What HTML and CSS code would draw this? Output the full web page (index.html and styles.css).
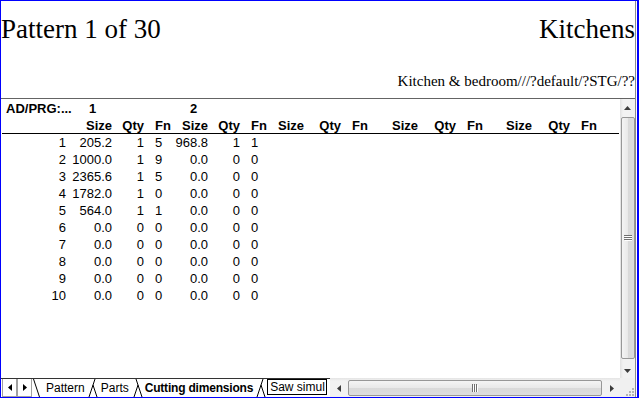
FILE: index.html
```html
<!DOCTYPE html>
<html lang="en">
<head>
    <meta charset="UTF-8">
    <title>Pattern 1 of 30</title>
    <link rel="stylesheet" href="styles.css">
</head>
<body>
    <div class="window">
        <div class="sheet">
            <header class="head">
                <div class="title">
                    <span>Pattern 1 of 30</span>
                    <span>Kitchens</span>
                </div>
                <div class="sub">Kitchen &amp; bedroom///?default/?STG/??</div>
            </header>

            <div class="view">
                <div class="grid">
                    <div class="row group">
                        <div class="label">AD/PRG:...</div>
                        <div class="g1">1</div>
                        <div></div>
                        <div></div>
                        <div class="g2">2</div>
                    </div>
                    <div class="row cols">
                        <div></div>
                        <div>Size</div><div>Qty</div><div class="f">Fn</div>
                        <div>Size</div><div>Qty</div><div class="f">Fn</div>
                        <div>Size</div><div>Qty</div><div class="f">Fn</div>
                        <div>Size</div><div>Qty</div><div class="f">Fn</div>
                        <div>Size</div><div>Qty</div><div class="f">Fn</div>
                    </div>
                    <div class="row"><div>1</div><div>205.2</div><div>1</div><div class="f">5</div><div>968.8</div><div>1</div><div class="f">1</div></div>
                    <div class="row"><div>2</div><div>1000.0</div><div>1</div><div class="f">9</div><div>0.0</div><div>0</div><div class="f">0</div></div>
                    <div class="row"><div>3</div><div>2365.6</div><div>1</div><div class="f">5</div><div>0.0</div><div>0</div><div class="f">0</div></div>
                    <div class="row"><div>4</div><div>1782.0</div><div>1</div><div class="f">0</div><div>0.0</div><div>0</div><div class="f">0</div></div>
                    <div class="row"><div>5</div><div>564.0</div><div>1</div><div class="f">1</div><div>0.0</div><div>0</div><div class="f">0</div></div>
                    <div class="row"><div>6</div><div>0.0</div><div>0</div><div class="f">0</div><div>0.0</div><div>0</div><div class="f">0</div></div>
                    <div class="row"><div>7</div><div>0.0</div><div>0</div><div class="f">0</div><div>0.0</div><div>0</div><div class="f">0</div></div>
                    <div class="row"><div>8</div><div>0.0</div><div>0</div><div class="f">0</div><div>0.0</div><div>0</div><div class="f">0</div></div>
                    <div class="row"><div>9</div><div>0.0</div><div>0</div><div class="f">0</div><div>0.0</div><div>0</div><div class="f">0</div></div>
                    <div class="row"><div>10</div><div>0.0</div><div>0</div><div class="f">0</div><div>0.0</div><div>0</div><div class="f">0</div></div>
                </div>

                <div class="vscroll">
                    <div class="vbtn">
                        <svg width="7" height="4" viewBox="0 0 7 4"><polygon points="3.5,0 7,4 0,4" fill="#3c3c3c"/></svg>
                    </div>
                    <div class="vthumb">
                        <svg width="8" height="6" viewBox="0 0 8 6">
                            <rect x="0" y="0" width="8" height="1" fill="#6f6f6f"/>
                            <rect x="0" y="2" width="8" height="1" fill="#6f6f6f"/>
                            <rect x="0" y="4" width="8" height="1" fill="#6f6f6f"/>
                            <rect x="1" y="1" width="7" height="1" fill="#fff"/>
                            <rect x="1" y="3" width="7" height="1" fill="#fff"/>
                            <rect x="1" y="5" width="7" height="1" fill="#fff"/>
                        </svg>
                    </div>
                    <div class="vbtn down">
                        <svg width="7" height="4" viewBox="0 0 7 4"><polygon points="0,0 7,0 3.5,4" fill="#3c3c3c"/></svg>
                    </div>
                </div>
            </div>

            <div class="bar">
                <div class="tabs">
                    <div class="nav first">
                        <svg width="4" height="7" viewBox="0 0 4 7"><polygon points="4,0 0,3.5 4,7" fill="#000"/></svg>
                    </div>
                    <div class="nav">
                        <svg width="4" height="7" viewBox="0 0 4 7"><polygon points="0,0 4,3.5 0,7" fill="#000"/></svg>
                    </div>
                    <svg class="edge" width="14" height="18" viewBox="0 0 14 18">
                        <line x1="1.5" y1="0" x2="7.5" y2="18" stroke="#000"/>
                    </svg>
                    <span class="tab">Pattern</span>
                    <svg class="edge" width="16" height="18" viewBox="0 0 16 18">
                        <line x1="4" y1="18" x2="10" y2="0" stroke="#000"/>
                        <line x1="8" y1="6" x2="12" y2="18" stroke="#000"/>
                    </svg>
                    <span class="tab">Parts</span>
                    <svg class="edge" width="16" height="18" viewBox="0 0 16 18">
                        <line x1="7" y1="0" x2="13" y2="18" stroke="#000"/>
                        <line x1="5" y1="18" x2="9" y2="6" stroke="#000"/>
                    </svg>
                    <span class="tab on">Cutting dimensions</span>
                    <svg class="edge" width="14" height="18" viewBox="0 0 14 18">
                        <line x1="4" y1="18" x2="10" y2="0" stroke="#000"/>
                        <line x1="8" y1="6" x2="12" y2="18" stroke="#000"/>
                    </svg>
                    <span class="tab cut">Saw simul</span>
                </div>

                <div class="hscroll">
                    <div class="hbtn">
                        <svg width="4" height="7" viewBox="0 0 4 7"><polygon points="4,0 0,3.5 4,7" fill="#3c3c3c"/></svg>
                    </div>
                    <div class="hthumb">
                        <svg width="6" height="8" viewBox="0 0 6 8">
                            <rect x="0" y="0" width="1" height="8" fill="#6f6f6f"/>
                            <rect x="2" y="0" width="1" height="8" fill="#6f6f6f"/>
                            <rect x="4" y="0" width="1" height="8" fill="#6f6f6f"/>
                            <rect x="1" y="1" width="1" height="7" fill="#fff"/>
                            <rect x="3" y="1" width="1" height="7" fill="#fff"/>
                            <rect x="5" y="1" width="1" height="7" fill="#fff"/>
                        </svg>
                    </div>
                    <div class="hbtn">
                        <svg width="4" height="7" viewBox="0 0 4 7"><polygon points="0,0 4,3.5 0,7" fill="#3c3c3c"/></svg>
                    </div>
                </div>

                <div class="corner">
                    <svg width="10" height="10" viewBox="0 0 10 10">
                        <rect x="7" y="1" width="2" height="2" fill="#b4b4b4"/>
                        <rect x="4" y="4" width="2" height="2" fill="#b4b4b4"/>
                        <rect x="7" y="4" width="2" height="2" fill="#b4b4b4"/>
                        <rect x="1" y="7" width="2" height="2" fill="#b4b4b4"/>
                        <rect x="4" y="7" width="2" height="2" fill="#b4b4b4"/>
                        <rect x="7" y="7" width="2" height="2" fill="#b4b4b4"/>
                    </svg>
                </div>
            </div>
        </div>
    </div>
</body>
</html>
```

FILE: styles.css
```css
body {
    margin: 0;
    background-color: #fff;
}
.window {
    width: 639px;
    height: 398px;
    box-sizing: border-box;
    border: 1px solid #0000ff;
    border-right-width: 2px;
    padding-right: 1px;
    background-color: #fff;
}
.sheet {
    height: 100%;
    display: flex;
    flex-direction: column;
    border-right: 1px solid #8c8c8c;
}

/* header */
.head {
    height: 98px;
    box-sizing: border-box;
    padding-top: 13px;
    border-bottom: 1px solid #646464;
    font-family: "Liberation Serif", "Times New Roman", serif;
    color: #000;
}
.title {
    display: flex;
    justify-content: space-between;
    font-size: 27px;
    line-height: 30px;
}
.sub {
    margin-top: 28px;
    text-align: right;
    font-size: 15px;
    line-height: 18px;
}

/* grid */
.view {
    height: 279px;
    display: flex;
}
.grid {
    flex: 1;
    padding-top: 1px;
    font: 13px/17px "Liberation Sans", Arial, sans-serif;
    color: #000;
}
.row {
    display: grid;
    grid-template-columns: 64px 46px 32px 31px 33px 32px 32px 32px 37px 45px 32px 38px 44px 32px 38px 30px 1fr;
    height: 17px;
    margin: 0 1px;
    white-space: nowrap;
}
.row > div {
    text-align: right;
}
.row > .f {
    text-align: left;
    padding-left: 11px;
}
.group {
    font-weight: bold;
}
.row > .label {
    text-align: left;
    padding-left: 4px;
}
.row > .g1 {
    text-align: left;
    padding-left: 23px;
}
.row > .g2 {
    text-align: left;
    padding-left: 15px;
}
.cols {
    font-weight: bold;
    height: 16px;
    border-bottom: 1px solid #000;
}

/* vertical scrollbar */
.vscroll {
    width: 15px;
    display: flex;
    flex-direction: column;
    background: linear-gradient(to right, #e2e2e2, #f2f2f2 3px, #f2f2f2);
}
.vbtn {
    height: 17px;
    display: flex;
    align-items: center;
    justify-content: center;
}
.vbtn.down {
    height: 18px;
    padding-top: 3px;
    box-sizing: border-box;
}
.vthumb {
    flex: 1;
    margin: 1px 0 1px 1px;
    border: 1px solid #979797;
    border-radius: 2px;
    background: linear-gradient(to right, #f4f4f4, #e8e8e8 50%, #d9d9d9 51%, #dedede);
    display: flex;
    align-items: center;
    justify-content: center;
}

/* bottom bar */
.bar {
    height: 19px;
    display: flex;
    font: 12px "Liberation Sans", Arial, sans-serif;
    color: #000;
}
.tabs {
    width: 329px;
    display: flex;
    border-top: 1px solid #333;
    overflow: hidden;
    white-space: nowrap;
}
.nav {
    width: 15px;
    box-sizing: border-box;
    border: 1px solid #a0a0a0;
    border-top: none;
    display: flex;
    align-items: center;
    justify-content: center;
}
.nav.first {
    margin-left: 1px;
}
.edge {
    display: block;
    flex: none;
}
.tab {
    line-height: 18px;
}
.tab.on {
    font-weight: bold;
    letter-spacing: -0.2px;
}
.tab.cut {
    align-self: flex-start;
    height: 14px;
    line-height: 14px;
    border: 1px solid #000;
    padding: 0 1px 0 2px;
}

/* horizontal scrollbar */
.hscroll {
    flex: 1;
    display: flex;
    padding: 2px 0 1px;
    background: linear-gradient(#e4e4e4, #f2f2f2 3px, #f2f2f2);
}
.hbtn {
    width: 17px;
    display: flex;
    align-items: center;
    justify-content: center;
}
.hthumb {
    flex: 1;
    margin: 0 1px;
    border: 1px solid #979797;
    border-radius: 2px;
    background: linear-gradient(#f4f4f4, #e8e8e8 50%, #d9d9d9 51%, #dedede);
    display: flex;
    align-items: center;
    justify-content: center;
}
.corner {
    width: 15px;
    background-color: #f0f0f0;
    display: flex;
    align-items: flex-end;
    justify-content: flex-end;
}
```
